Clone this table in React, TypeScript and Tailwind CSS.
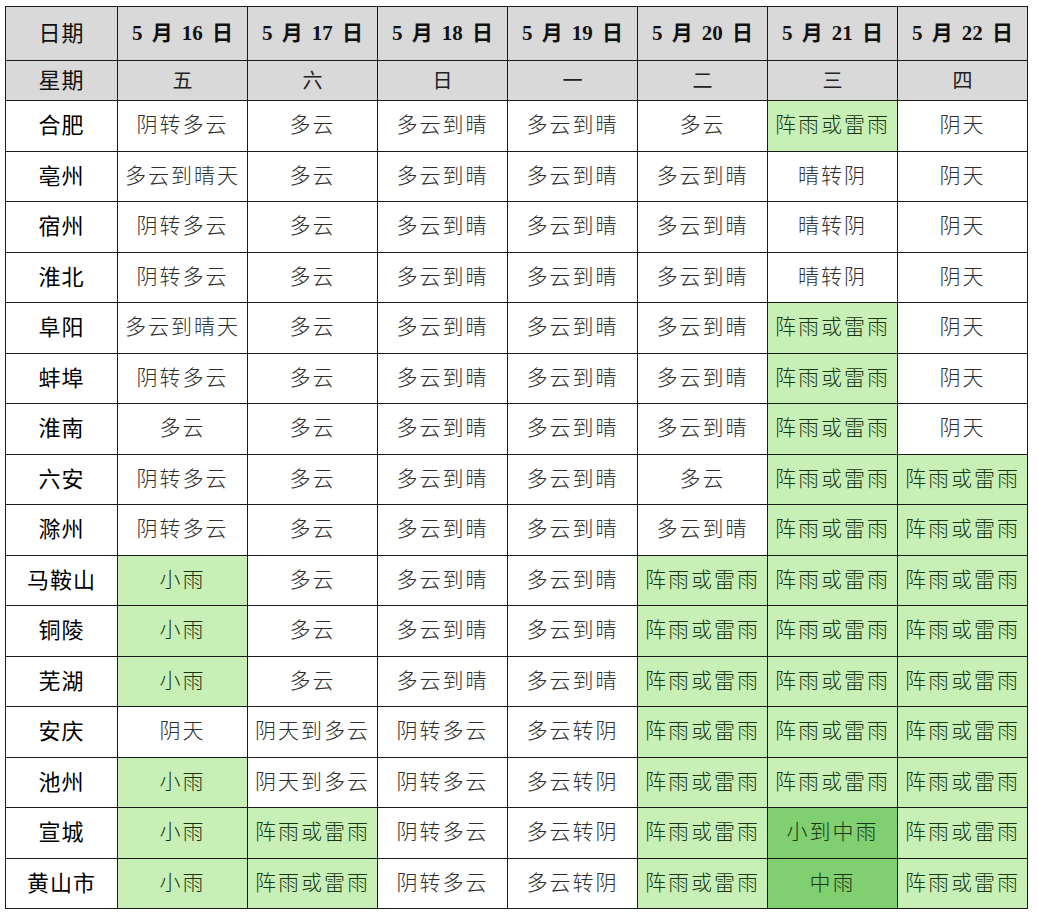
import React from "react";

type Cell = string | { t: string; c: "g" | "d" };

const dates = ["5 月 16 日", "5 月 17 日", "5 月 18 日", "5 月 19 日", "5 月 20 日", "5 月 21 日", "5 月 22 日"];
const weekdays = ["五", "六", "日", "一", "二", "三", "四"];

const G: Cell = { t: "阵雨或雷雨", c: "g" };
const XY: Cell = { t: "小雨", c: "g" };

const rows: [string, Cell[]][] = [
  ["合肥", ["阴转多云", "多云", "多云到晴", "多云到晴", "多云", G, "阴天"]],
  ["亳州", ["多云到晴天", "多云", "多云到晴", "多云到晴", "多云到晴", "晴转阴", "阴天"]],
  ["宿州", ["阴转多云", "多云", "多云到晴", "多云到晴", "多云到晴", "晴转阴", "阴天"]],
  ["淮北", ["阴转多云", "多云", "多云到晴", "多云到晴", "多云到晴", "晴转阴", "阴天"]],
  ["阜阳", ["多云到晴天", "多云", "多云到晴", "多云到晴", "多云到晴", G, "阴天"]],
  ["蚌埠", ["阴转多云", "多云", "多云到晴", "多云到晴", "多云到晴", G, "阴天"]],
  ["淮南", ["多云", "多云", "多云到晴", "多云到晴", "多云到晴", G, "阴天"]],
  ["六安", ["阴转多云", "多云", "多云到晴", "多云到晴", "多云", G, G]],
  ["滁州", ["阴转多云", "多云", "多云到晴", "多云到晴", "多云到晴", G, G]],
  ["马鞍山", [XY, "多云", "多云到晴", "多云到晴", G, G, G]],
  ["铜陵", [XY, "多云", "多云到晴", "多云到晴", G, G, G]],
  ["芜湖", [XY, "多云", "多云到晴", "多云到晴", G, G, G]],
  ["安庆", ["阴天", "阴天到多云", "阴转多云", "多云转阴", G, G, G]],
  ["池州", [XY, "阴天到多云", "阴转多云", "多云转阴", G, G, G]],
  ["宣城", [XY, G, "阴转多云", "多云转阴", G, { t: "小到中雨", c: "d" }, G]],
  ["黄山市", [XY, G, "阴转多云", "多云转阴", G, { t: "中雨", c: "d" }, G]],
];

const font = { fontFamily: '"Liberation Serif", "Noto Sans CJK SC", serif' };

function WeatherCell({ cell }: { cell: Cell }) {
  if (typeof cell === "string") {
    return (
      <td className="border border-[#1a1a1a] text-center text-[21px] font-light tracking-[2px] text-[#2e2e2e]">
        {cell}
      </td>
    );
  }
  const bg = cell.c === "g" ? "bg-[#c8f0b6]" : "bg-[#80cf70]";
  return (
    <td className={`border border-[#1a1a1a] text-center text-[21px] font-light tracking-[2px] text-[#173714] ${bg}`}>
      {cell.t}
    </td>
  );
}

export default function App() {
  return (
    <div className="w-[1038px] h-[914px] bg-white pt-[6px] pl-[5px]" style={font}>
      <table className="table-fixed border-collapse w-[1022px]">
        <colgroup>
          <col className="w-[112px]" />
          {dates.map((d) => (
            <col key={d} className="w-[130px]" />
          ))}
        </colgroup>
        <tbody>
          <tr className="h-[54px] bg-[#d9d9d9]">
            <td className="border border-[#1a1a1a] text-center text-[22px] tracking-[1px] text-[#111]">日期</td>
            {dates.map((d) => (
              <td
                key={d}
                className="border border-[#1a1a1a] text-center text-[21px] font-bold text-[#111] whitespace-pre [word-spacing:4px]"
              >
                {d}
              </td>
            ))}
          </tr>
          <tr className="h-[40px] bg-[#d9d9d9]">
            <td className="border border-[#1a1a1a] text-center text-[22px] tracking-[1px] text-[#111]">星期</td>
            {weekdays.map((w) => (
              <td key={w} className="border border-[#1a1a1a] text-center text-[20px] text-[#222]">
                {w}
              </td>
            ))}
          </tr>
          {rows.map(([city, cells]) => (
            <tr key={city} className="h-[50.5px]">
              <td className="border border-[#1a1a1a] text-center text-[22px] tracking-[1px] text-black">
                {city}
              </td>
              {cells.map((c, i) => (
                <WeatherCell key={i} cell={c} />
              ))}
            </tr>
          ))}
        </tbody>
      </table>
    </div>
  );
}
